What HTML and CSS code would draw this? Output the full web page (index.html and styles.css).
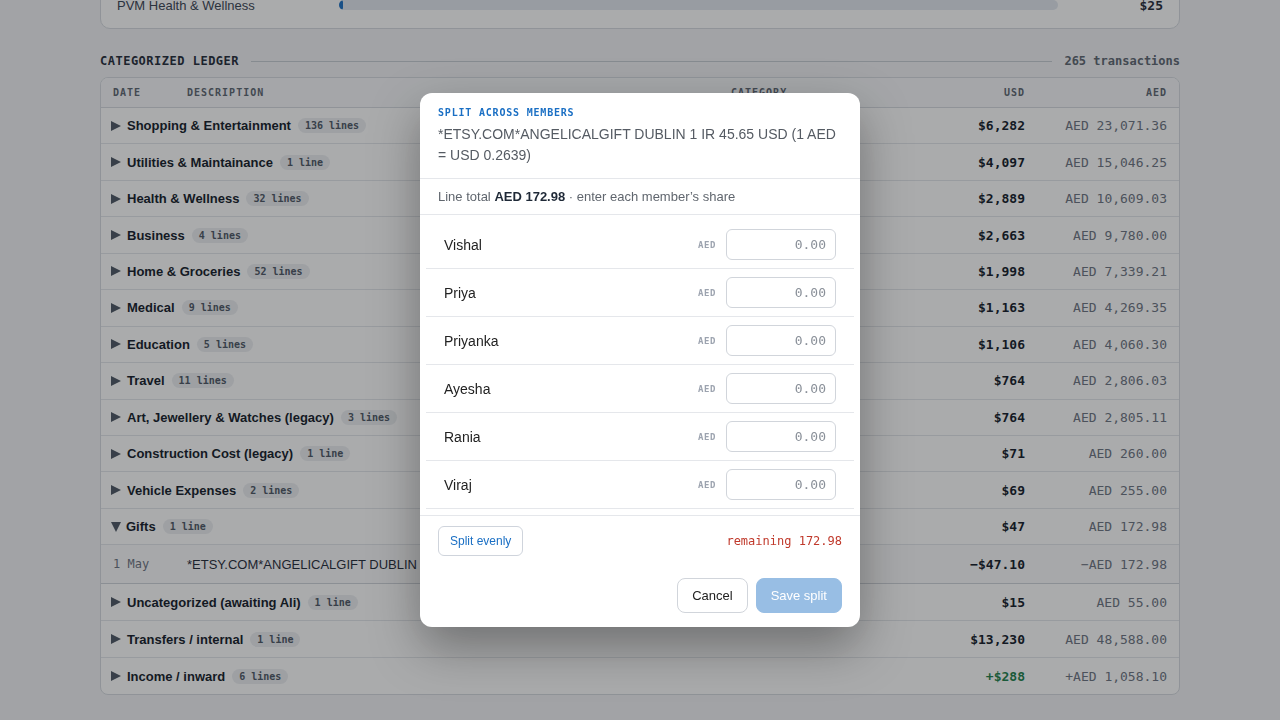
FILE: index.html
```html
<!DOCTYPE html>
<html lang="en">
<head>
  <meta charset="UTF-8" />
  <meta name="viewport" content="width=device-width, initial-scale=1.0"/>
  <title>Categorized Ledger</title>
  <link rel="stylesheet" href="styles.css">
</head>
<body>
  <div class="page">

    <!-- Member budget card (scrolled, only the last row shows) -->
    <div class="card budget">
      <div class="budget-row">
        <div class="budget-label">PVM Health &amp; Wellness</div>
        <div class="budget-bar"><div class="budget-fill" style="width: 4px"></div></div>
        <div class="budget-amt">$25</div>
      </div>
    </div>

    <div class="section-head">
      <h2>CATEGORIZED LEDGER</h2>
      <div class="rule"></div>
      <div class="count">265 transactions</div>
    </div>

    <div class="card ledger">
      <div class="row head">
        <div>DATE</div>
        <div>DESCRIPTION</div>
        <div>CATEGORY</div>
        <div class="num">USD</div>
        <div class="num">AED</div>
      </div>

      <div class="row cat"><div class="name"><span class="tri"></span>Shopping &amp; Entertainment<span class="pill">136 lines</span></div><div class="usd">$6,282</div><div class="aed">AED 23,071.36</div></div>
      <div class="row cat"><div class="name"><span class="tri"></span>Utilities &amp; Maintainance<span class="pill">1 line</span></div><div class="usd">$4,097</div><div class="aed">AED 15,046.25</div></div>
      <div class="row cat"><div class="name"><span class="tri"></span>Health &amp; Wellness<span class="pill">32 lines</span></div><div class="usd">$2,889</div><div class="aed">AED 10,609.03</div></div>
      <div class="row cat"><div class="name"><span class="tri"></span>Business<span class="pill">4 lines</span></div><div class="usd">$2,663</div><div class="aed">AED 9,780.00</div></div>
      <div class="row cat"><div class="name"><span class="tri"></span>Home &amp; Groceries<span class="pill">52 lines</span></div><div class="usd">$1,998</div><div class="aed">AED 7,339.21</div></div>
      <div class="row cat"><div class="name"><span class="tri"></span>Medical<span class="pill">9 lines</span></div><div class="usd">$1,163</div><div class="aed">AED 4,269.35</div></div>
      <div class="row cat"><div class="name"><span class="tri"></span>Education<span class="pill">5 lines</span></div><div class="usd">$1,106</div><div class="aed">AED 4,060.30</div></div>
      <div class="row cat"><div class="name"><span class="tri"></span>Travel<span class="pill">11 lines</span></div><div class="usd">$764</div><div class="aed">AED 2,806.03</div></div>
      <div class="row cat"><div class="name"><span class="tri"></span>Art, Jewellery &amp; Watches (legacy)<span class="pill">3 lines</span></div><div class="usd">$764</div><div class="aed">AED 2,805.11</div></div>
      <div class="row cat"><div class="name"><span class="tri"></span>Construction Cost (legacy)<span class="pill">1 line</span></div><div class="usd">$71</div><div class="aed">AED 260.00</div></div>
      <div class="row cat"><div class="name"><span class="tri"></span>Vehicle Expenses<span class="pill">2 lines</span></div><div class="usd">$69</div><div class="aed">AED 255.00</div></div>
      <div class="row cat"><div class="name"><span class="tri open"></span>Gifts<span class="pill">1 line</span></div><div class="usd">$47</div><div class="aed">AED 172.98</div></div>
      <div class="row line">
        <div class="date">1 May</div>
        <div class="desc">*ETSY.COM*ANGELICALGIFT DUBLIN 1 IR 45.65 USD</div>
        <div class="desc">Gifts</div>
        <div class="usd">&minus;$47.10</div>
        <div class="aed">&minus;AED 172.98</div>
      </div>
      <div class="row cat after"><div class="name"><span class="tri"></span>Uncategorized (awaiting Ali)<span class="pill">1 line</span></div><div class="usd">$15</div><div class="aed">AED 55.00</div></div>
      <div class="row cat after"><div class="name"><span class="tri"></span>Transfers / internal<span class="pill">1 line</span></div><div class="usd">$13,230</div><div class="aed">AED 48,588.00</div></div>
      <div class="row cat after last"><div class="name"><span class="tri"></span>Income / inward<span class="pill">6 lines</span></div><div class="usd pos">+$288</div><div class="aed">+AED 1,058.10</div></div>
    </div>
  </div>

  <!-- Split modal -->
  <div class="overlay">
    <div class="modal">
      <div class="modal-head">
        <div class="eyebrow">SPLIT ACROSS MEMBERS</div>
        <div class="modal-title">*ETSY.COM*ANGELICALGIFT DUBLIN 1 IR 45.65 USD (1 AED = USD 0.2639)</div>
      </div>
      <div class="modal-total">Line total <b>AED 172.98</b> · enter each member’s share</div>

      <div class="members">
        <div class="member"><span class="who">Vishal</span><span class="cur">AED</span><input type="text" placeholder="0.00"></div>
        <div class="member"><span class="who">Priya</span><span class="cur">AED</span><input type="text" placeholder="0.00"></div>
        <div class="member"><span class="who">Priyanka</span><span class="cur">AED</span><input type="text" placeholder="0.00"></div>
        <div class="member"><span class="who">Ayesha</span><span class="cur">AED</span><input type="text" placeholder="0.00"></div>
        <div class="member"><span class="who">Rania</span><span class="cur">AED</span><input type="text" placeholder="0.00"></div>
        <div class="member"><span class="who">Viraj</span><span class="cur">AED</span><input type="text" placeholder="0.00"></div>
      </div>

      <div class="modal-foot">
        <div class="foot-top">
          <button class="btn-ghost">Split evenly</button>
          <span class="remaining">remaining 172.98</span>
        </div>
        <div class="actions">
          <button class="btn">Cancel</button>
          <button class="btn primary" disabled>Save split</button>
        </div>
      </div>
    </div>
  </div>
</body>
</html>
```

FILE: styles.css
```css
body {
  margin: 0;
  font-family: "Liberation Sans", Arial, sans-serif;
  background: #f2f3f5;
  color: #1f2937;
  overflow: hidden;
}
.page {
  padding: 0 100px;
}
.card {
  background: #fff;
  border: 1px solid #d6dae0;
  border-radius: 10px;
}

/* budget card */
.budget {
  margin-top: -20px;
  padding: 14px 16px 13px;
  border-top-left-radius: 0;
  border-top-right-radius: 0;
}
.budget-row {
  display: flex;
  align-items: center;
  height: 20px;
}
.budget-label {
  width: 222px;
  font-size: 13px;
  color: #374151;
}
.budget-bar {
  flex: 1;
  height: 10px;
  background: #e2e8f0;
  border-radius: 5px;
  overflow: hidden;
}
.budget-fill {
  height: 100%;
  background: #1a6fc4;
  border-radius: 5px;
}
.budget-amt {
  width: 105px;
  text-align: right;
  font-family: "DejaVu Sans Mono", monospace;
  font-weight: bold;
  font-size: 13px;
}

/* section heading */
.section-head {
  display: flex;
  align-items: center;
  gap: 12px;
  margin: 25px 0 9px;
}
.section-head h2 {
  margin: 0;
  font-family: "DejaVu Sans Mono", monospace;
  font-size: 12px;
  letter-spacing: 0.5px;
  color: #1f2937;
}
.rule {
  flex: 1;
  height: 1px;
  background: #c7ccd3;
}
.count {
  font-family: "DejaVu Sans Mono", monospace;
  font-size: 12px;
  font-weight: bold;
  color: #5b6470;
}

/* ledger table */
.ledger {
  border-radius: 8px;
  overflow: hidden;
}
.row {
  display: grid;
  grid-template-columns: 74px 544px 194px 100px 142px;
  align-items: center;
  padding: 0 12px;
  height: 35.45px;
  border-bottom: 1px solid #e3e6ea;
}
.row.after {
  height: 36px;
}
.row.last {
  border-bottom: none;
}
.row.head {
  height: 29px;
  background: #f7f8fa;
  font-family: "DejaVu Sans Mono", monospace;
  font-size: 10px;
  font-weight: bold;
  letter-spacing: 1px;
  color: #5b6470;
  border-bottom-color: #d6dae0;
}
.num, .usd, .aed {
  text-align: right;
}
.usd {
  font-family: "DejaVu Sans Mono", monospace;
  font-size: 13px;
  font-weight: bold;
  color: #111827;
}
.usd.pos {
  color: #1b7f4a;
}
.aed {
  font-family: "DejaVu Sans Mono", monospace;
  font-size: 13px;
  color: #6b7280;
}
.cat .name {
  grid-column: 1 / 4;
  display: flex;
  align-items: center;
  font-size: 13px;
  font-weight: bold;
  color: #111827;
}
.tri {
  width: 0;
  height: 0;
  margin: 0 6px 0 -2px;
  border-top: 5.5px solid transparent;
  border-bottom: 5.5px solid transparent;
  border-left: 10px solid #4b5563;
}
.tri.open {
  margin-right: 5px;
  border-left: 5.5px solid transparent;
  border-right: 5.5px solid transparent;
  border-top: 10px solid #4b5563;
  border-bottom: none;
}
.pill {
  margin-left: 7px;
  padding: 2px 7px;
  border-radius: 9px;
  background: #eceef1;
  font-family: "DejaVu Sans Mono", monospace;
  font-size: 10px;
  color: #4b5563;
}
.row.line {
  height: 38px;
  background: #fbfbfc;
  border-bottom-color: #cfd3d9;
}
.date {
  font-family: "DejaVu Sans Mono", monospace;
  font-size: 12px;
  color: #6b7280;
}
.desc {
  font-size: 13px;
  color: #1f2937;
  white-space: nowrap;
}

/* modal */
.overlay {
  position: fixed;
  inset: 0;
  background: rgba(24, 26, 30, 0.37);
  display: flex;
  align-items: center;
  justify-content: center;
}
.modal {
  width: 440px;
  background: #fff;
  border-radius: 12px;
  box-shadow: 0 20px 50px rgba(0, 0, 0, 0.35);
  overflow: hidden;
}
.modal-head {
  padding: 14px 18px 12px;
  border-bottom: 1px solid #e5e7eb;
}
.eyebrow {
  font-family: "DejaVu Sans Mono", monospace;
  font-size: 10px;
  font-weight: bold;
  letter-spacing: 0.8px;
  color: #1a6fc4;
  margin-bottom: 6px;
}
.modal-title {
  font-size: 14px;
  line-height: 21px;
  color: #555b63;
}
.modal-total {
  padding: 10px 18px 10px;
  font-size: 13px;
  color: #60666e;
  border-bottom: 1px solid #e5e7eb;
}
.modal-total b {
  color: #1f2937;
}
.members {
  padding: 6px 6px;
}
.member {
  display: flex;
  align-items: center;
  height: 47px;
  padding: 0 18px;
  border-bottom: 1px solid #e5e7eb;
}
.who {
  flex: 1;
  font-size: 14px;
  color: #222;
}
.cur {
  font-family: "DejaVu Sans Mono", monospace;
  font-size: 9px;
  font-weight: bold;
  letter-spacing: 0.6px;
  color: #9ca3af;
  margin-right: 10px;
}
.member input {
  width: 110px;
  height: 31px;
  box-sizing: border-box;
  border: 1px solid #d1d5db;
  border-radius: 6px;
  padding: 0 9px;
  text-align: right;
  font-family: "DejaVu Sans Mono", monospace;
  font-size: 13px;
}
.member input::placeholder {
  color: #8a9099;
}
.modal-foot {
  border-top: 1px solid #e5e7eb;
  padding: 10px 18px 14px;
}
.foot-top {
  display: flex;
  align-items: center;
  justify-content: space-between;
}
.btn-ghost {
  height: 30px;
  padding: 0 11px;
  background: #fff;
  border: 1px solid #cfd4dc;
  border-radius: 6px;
  font-family: "Liberation Sans", Arial, sans-serif;
  font-size: 12px;
  color: #1a6fc4;
}
.remaining {
  font-family: "DejaVu Sans Mono", monospace;
  font-size: 12px;
  color: #c0392b;
}
.actions {
  display: flex;
  justify-content: flex-end;
  gap: 8px;
  margin-top: 22px;
}
.btn {
  height: 35px;
  padding: 0 14px;
  background: #fff;
  border: 1px solid #d1d5db;
  border-radius: 8px;
  font-family: "Liberation Sans", Arial, sans-serif;
  font-size: 13px;
  color: #222;
}
.btn.primary {
  background: #98bee4;
  border-color: #98bee4;
  color: #fff;
}
```
